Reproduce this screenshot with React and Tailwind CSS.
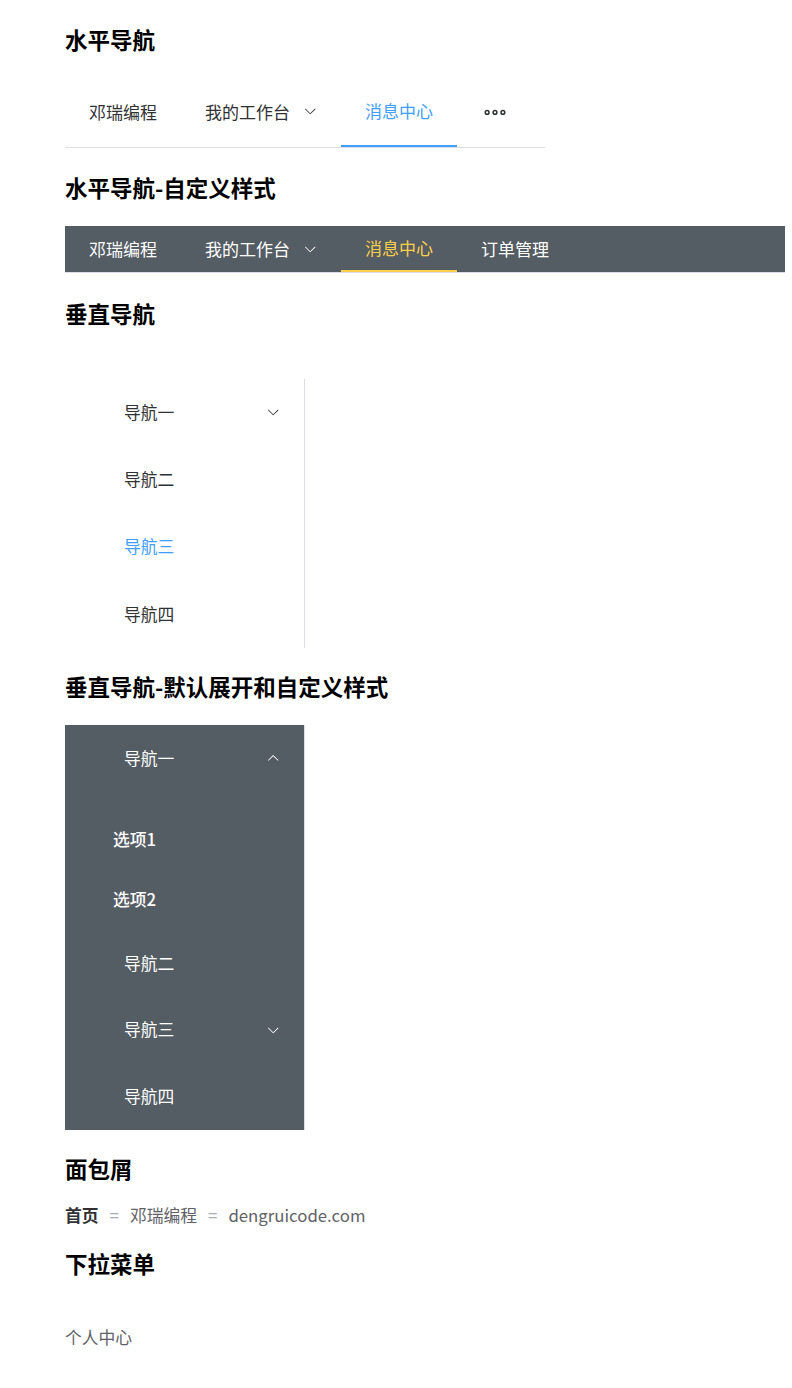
import React from "react";

const FONT = { fontFamily: '"Noto Sans CJK SC", "Noto Sans", sans-serif' };

function ArrowDown({ className = "", up = false }) {
  return (
    <svg viewBox="0 0 1024 1024" className={className} style={up ? { transform: "rotate(180deg)" } : undefined} fill="currentColor">
      <path d="M831.872 340.864 512 652.672 192.128 340.864a30.592 30.592 0 0 0-42.752 0 29.12 29.12 0 0 0 0 41.6L489.664 714.24a32 32 0 0 0 44.672 0l340.288-331.712a29.12 29.12 0 0 0 0-41.728 30.592 30.592 0 0 0-42.752 0z" />
    </svg>
  );
}

function More({ className = "" }) {
  return (
    <svg viewBox="0 0 1024 1024" className={className} fill="currentColor">
      <path d="M176 416a112 112 0 1 0 0 224 112 112 0 0 0 0-224m0 64a48 48 0 1 1 0 96 48 48 0 0 1 0-96m336-64a112 112 0 1 1 0 224 112 112 0 0 1 0-224m0 64a48 48 0 1 0 0 96 48 48 0 0 0 0-96m336-64a112 112 0 1 1 0 224 112 112 0 0 1 0-224m0 64a48 48 0 1 0 0 96 48 48 0 0 0 0-96" />
    </svg>
  );
}

function Heading({ children, className = "" }) {
  return <h3 className={`text-[22.5px] leading-[32px] font-bold text-black ${className}`}>{children}</h3>;
}

export default function App() {
  return (
    <div className="min-h-[1388px] bg-white pl-[65px] pt-[23px]" style={FONT}>
      <Heading>水平导航</Heading>

      <div className="mt-[21px] flex h-[72px] w-[480px] border-b border-[#dcdfe6] text-[17px] text-[#303133]">
        <div className="flex h-full items-center px-[24px]">邓瑞编程</div>
        <div className="flex h-full items-center px-[24px]">
          我的工作台
          <ArrowDown className="ml-[12.5px] h-[14.4px] w-[14.4px] text-[#303133]" />
        </div>
        <div className="flex h-full items-center border-b-2 border-[#409eff] px-[24px] text-[#409eff]">消息中心</div>
        <div className="flex h-full items-center pl-[26px] pr-[22px]">
          <More className="h-[24px] w-[24px] text-[#303133]" />
        </div>
      </div>

      <Heading className="mt-[23px]">水平导航-自定义样式</Heading>

      <div className="mt-[23px] flex h-[47px] w-[720px] border-b border-[#dcdfe6] bg-[#545c64] text-[17px] text-white">
        <div className="flex h-full items-center px-[24px]">邓瑞编程</div>
        <div className="flex h-full items-center px-[24px]">
          我的工作台
          <ArrowDown className="ml-[12.5px] h-[14.4px] w-[14.4px] text-white" />
        </div>
        <div className="flex h-full items-center border-b-2 border-[#ffd04b] px-[24px] text-[#ffd04b]">消息中心</div>
        <div className="flex h-full items-center px-[24px]">订单管理</div>
      </div>

      <Heading className="mt-[24px]">垂直导航</Heading>

      <div className="mt-[50px] w-[240px] border-r border-[#dcdfe6] text-[16.8px] text-[#303133]">
        <div className="flex h-[67.2px] items-center justify-between pl-[59px] pr-[24px]">
          <span>导航一</span>
          <ArrowDown className="h-[14.4px] w-[14.4px] text-[#303133]" />
        </div>
        <div className="flex h-[67.2px] items-center pl-[59px]">导航二</div>
        <div className="flex h-[67.2px] items-center pl-[59px] text-[#409eff]">导航三</div>
        <div className="flex h-[67.2px] items-center pl-[59px]">导航四</div>
      </div>

      <Heading className="mt-[22px]">垂直导航-默认展开和自定义样式</Heading>

      <div className="mt-[23px] w-[240px] border-r border-[#dcdfe6] bg-[#545c64] text-[16.8px] text-white">
        <div className="flex h-[67px] items-center justify-between pl-[59px] pr-[24px]">
          <span>导航一</span>
          <ArrowDown up className="h-[14.4px] w-[14.4px] text-white" />
        </div>
        <div className="h-[18px]" />
        <div className="flex h-[60px] items-center pl-[48px] font-medium">选项1</div>
        <div className="flex h-[60px] items-center pl-[48px] font-medium">选项2</div>
        <div className="flex h-[67px] items-center pl-[59px]">导航二</div>
        <div className="flex h-[66px] items-center justify-between pl-[59px] pr-[24px]">
          <span>导航三</span>
          <ArrowDown className="h-[14.4px] w-[14.4px] text-white" />
        </div>
        <div className="flex h-[67px] items-center pl-[59px]">导航四</div>
      </div>

      <Heading className="mt-[22px]">面包屑</Heading>

      <div className="mt-[20px] flex h-[24px] items-center text-[16.8px] text-[#606266]">
        <span className="font-bold text-[#303133]">首页</span>
        <span className="mx-[11px] text-[#a8abb2]">=</span>
        <span>邓瑞编程</span>
        <span className="mx-[11px] text-[#a8abb2]">=</span>
        <span>dengruicode.com</span>
      </div>

      <Heading className="mt-[19px]">下拉菜单</Heading>

      <div className="mt-[47px] flex h-[24px] items-center text-[16.8px] text-[#606266]">个人中心</div>
    </div>
  );
}
